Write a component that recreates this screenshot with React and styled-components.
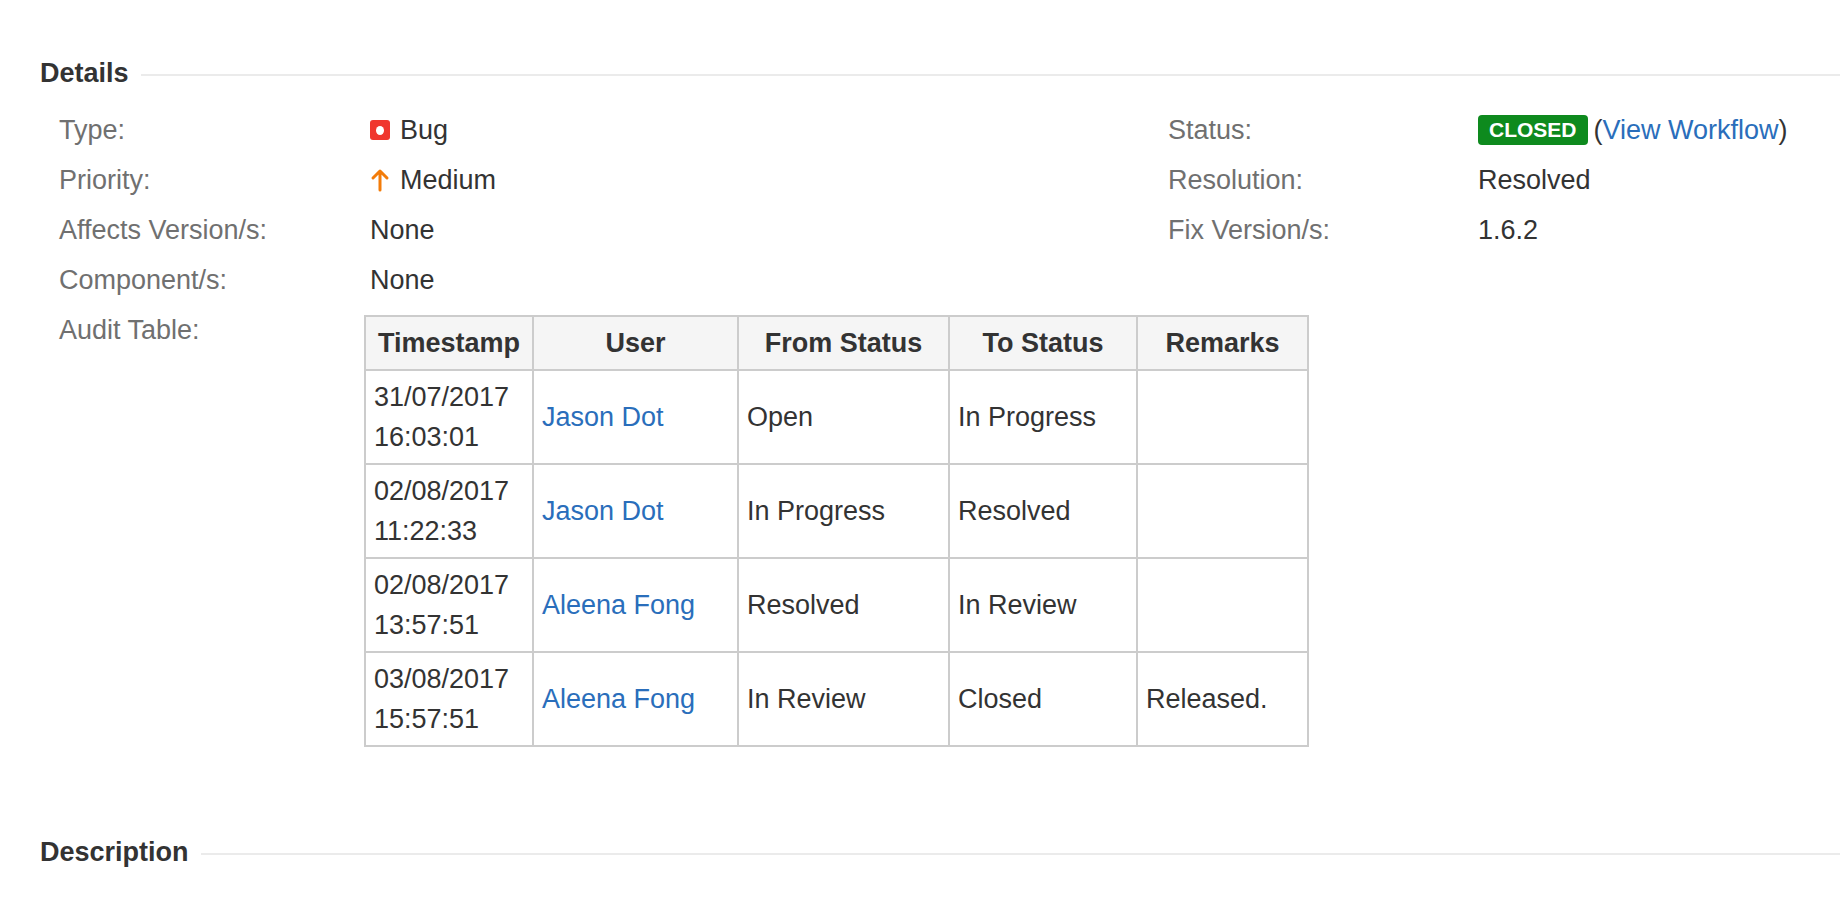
import React from 'react';
import styled, { createGlobalStyle } from 'styled-components';

const Global = createGlobalStyle`
  body {
    margin: 0;
    background: #fff;
    font-family: "Liberation Sans", Arial, sans-serif;
    color: #333;
    font-size: 27px;
  }
`;

const Page = styled.div`
  padding: 56px 0 0 40px;
`;

const Heading = styled.div`
  display: flex;
  align-items: center;
  gap: 12px;
  font-weight: bold;
  font-size: 27px;
  line-height: 34px;
  color: #333;
  &::after {
    content: '';
    flex: 1;
    height: 2px;
    background: #ebebeb;
    margin-top: 3px;
  }
`;

const Columns = styled.div`
  display: flex;
  padding: 15px 0 0 19px;
`;

const Fields = styled.div`
  display: grid;
  grid-template-columns: ${({ labelWidth }) => labelWidth}px auto;
  grid-auto-rows: minmax(50px, auto);
  width: ${({ width }) => width || 'auto'};
  align-content: start;
`;

const Label = styled.div`
  color: #707070;
  line-height: 50px;
`;

const Value = styled.div`
  line-height: 50px;
  display: flex;
  align-items: center;
  gap: 8px;
`;

const BugIcon = styled.span`
  width: 20px;
  height: 20px;
  border-radius: 3px;
  background: #f0362e;
  display: inline-flex;
  align-items: center;
  justify-content: center;
  margin-right: 2px;
  &::after {
    content: '';
    width: 8px;
    height: 9px;
    border-radius: 50%;
    background: #fff;
  }
`;

const Badge = styled.span`
  background: #0e8a1e;
  color: #fff;
  font-weight: bold;
  font-size: 21px;
  line-height: 30px;
  padding: 0 11px;
  border-radius: 4px;
`;

const Link = styled.a`
  color: #2a6ebb;
  text-decoration: none;
`;

const TableWrap = styled.div`
  padding-top: 10px;
  padding-bottom: 10px;
  margin-left: -6px;
`;

const Table = styled.table`
  border-collapse: collapse;
  border: 2px solid #ccc;
  table-layout: fixed;
  width: 943px;
`;

const Th = styled.th`
  background: #f5f5f5;
  border: 2px solid #ccc;
  font-weight: bold;
  line-height: 40px;
  padding: 6px 8px;
  text-align: center;
  width: ${({ w }) => w}px;
  white-space: nowrap;
`;

const Td = styled.td`
  border: 2px solid #ccc;
  line-height: 40px;
  padding: 6px 8px;
  vertical-align: middle;
  white-space: nowrap;
`;

const Spacer = styled.div`
  height: 78px;
`;

const audit = [
  ['31/07/2017', '16:03:01', 'Jason Dot', 'Open', 'In Progress', ''],
  ['02/08/2017', '11:22:33', 'Jason Dot', 'In Progress', 'Resolved', ''],
  ['02/08/2017', '13:57:51', 'Aleena Fong', 'Resolved', 'In Review', ''],
  ['03/08/2017', '15:57:51', 'Aleena Fong', 'In Review', 'Closed', 'Released.'],
];

const Arrow = () => (
  <svg width="20" height="24" viewBox="0 0 20 24" style={{ marginRight: 2 }}>
    <path d="M10 22V3M3 10l7-7 7 7" fill="none" stroke="#f37c0a" strokeWidth="3" strokeLinecap="round" strokeLinejoin="round" />
  </svg>
);

export default function App() {
  return (
    <Page>
      <Global />
      <Heading>Details</Heading>
      <Columns>
        <Fields labelWidth={311} width="1109px">
          <Label>Type:</Label>
          <Value><BugIcon />Bug</Value>
          <Label>Priority:</Label>
          <Value><Arrow />Medium</Value>
          <Label>Affects Version/s:</Label>
          <Value>None</Value>
          <Label>Component/s:</Label>
          <Value>None</Value>
          <Label>Audit Table:</Label>
          <TableWrap>
            <Table>
              <colgroup>
                <col style={{ width: 168 }} />
                <col style={{ width: 205 }} />
                <col style={{ width: 211 }} />
                <col style={{ width: 188 }} />
                <col style={{ width: 171 }} />
              </colgroup>
              <thead>
                <tr>
                  <Th>Timestamp</Th>
                  <Th>User</Th>
                  <Th>From Status</Th>
                  <Th>To Status</Th>
                  <Th>Remarks</Th>
                </tr>
              </thead>
              <tbody>
                {audit.map((r, i) => (
                  <tr key={i}>
                    <Td>{r[0]}<br />{r[1]}</Td>
                    <Td><Link href="#">{r[2]}</Link></Td>
                    <Td>{r[3]}</Td>
                    <Td>{r[4]}</Td>
                    <Td>{r[5]}</Td>
                  </tr>
                ))}
              </tbody>
            </Table>
          </TableWrap>
        </Fields>
        <Fields labelWidth={310}>
          <Label>Status:</Label>
          <Value style={{ gap: 6 }}>
            <Badge>CLOSED</Badge>
            <span>(<Link href="#">View Workflow</Link>)</span>
          </Value>
          <Label>Resolution:</Label>
          <Value>Resolved</Value>
          <Label>Fix Version/s:</Label>
          <Value>1.6.2</Value>
        </Fields>
      </Columns>
      <Spacer />
      <Heading>Description</Heading>
    </Page>
  );
}
